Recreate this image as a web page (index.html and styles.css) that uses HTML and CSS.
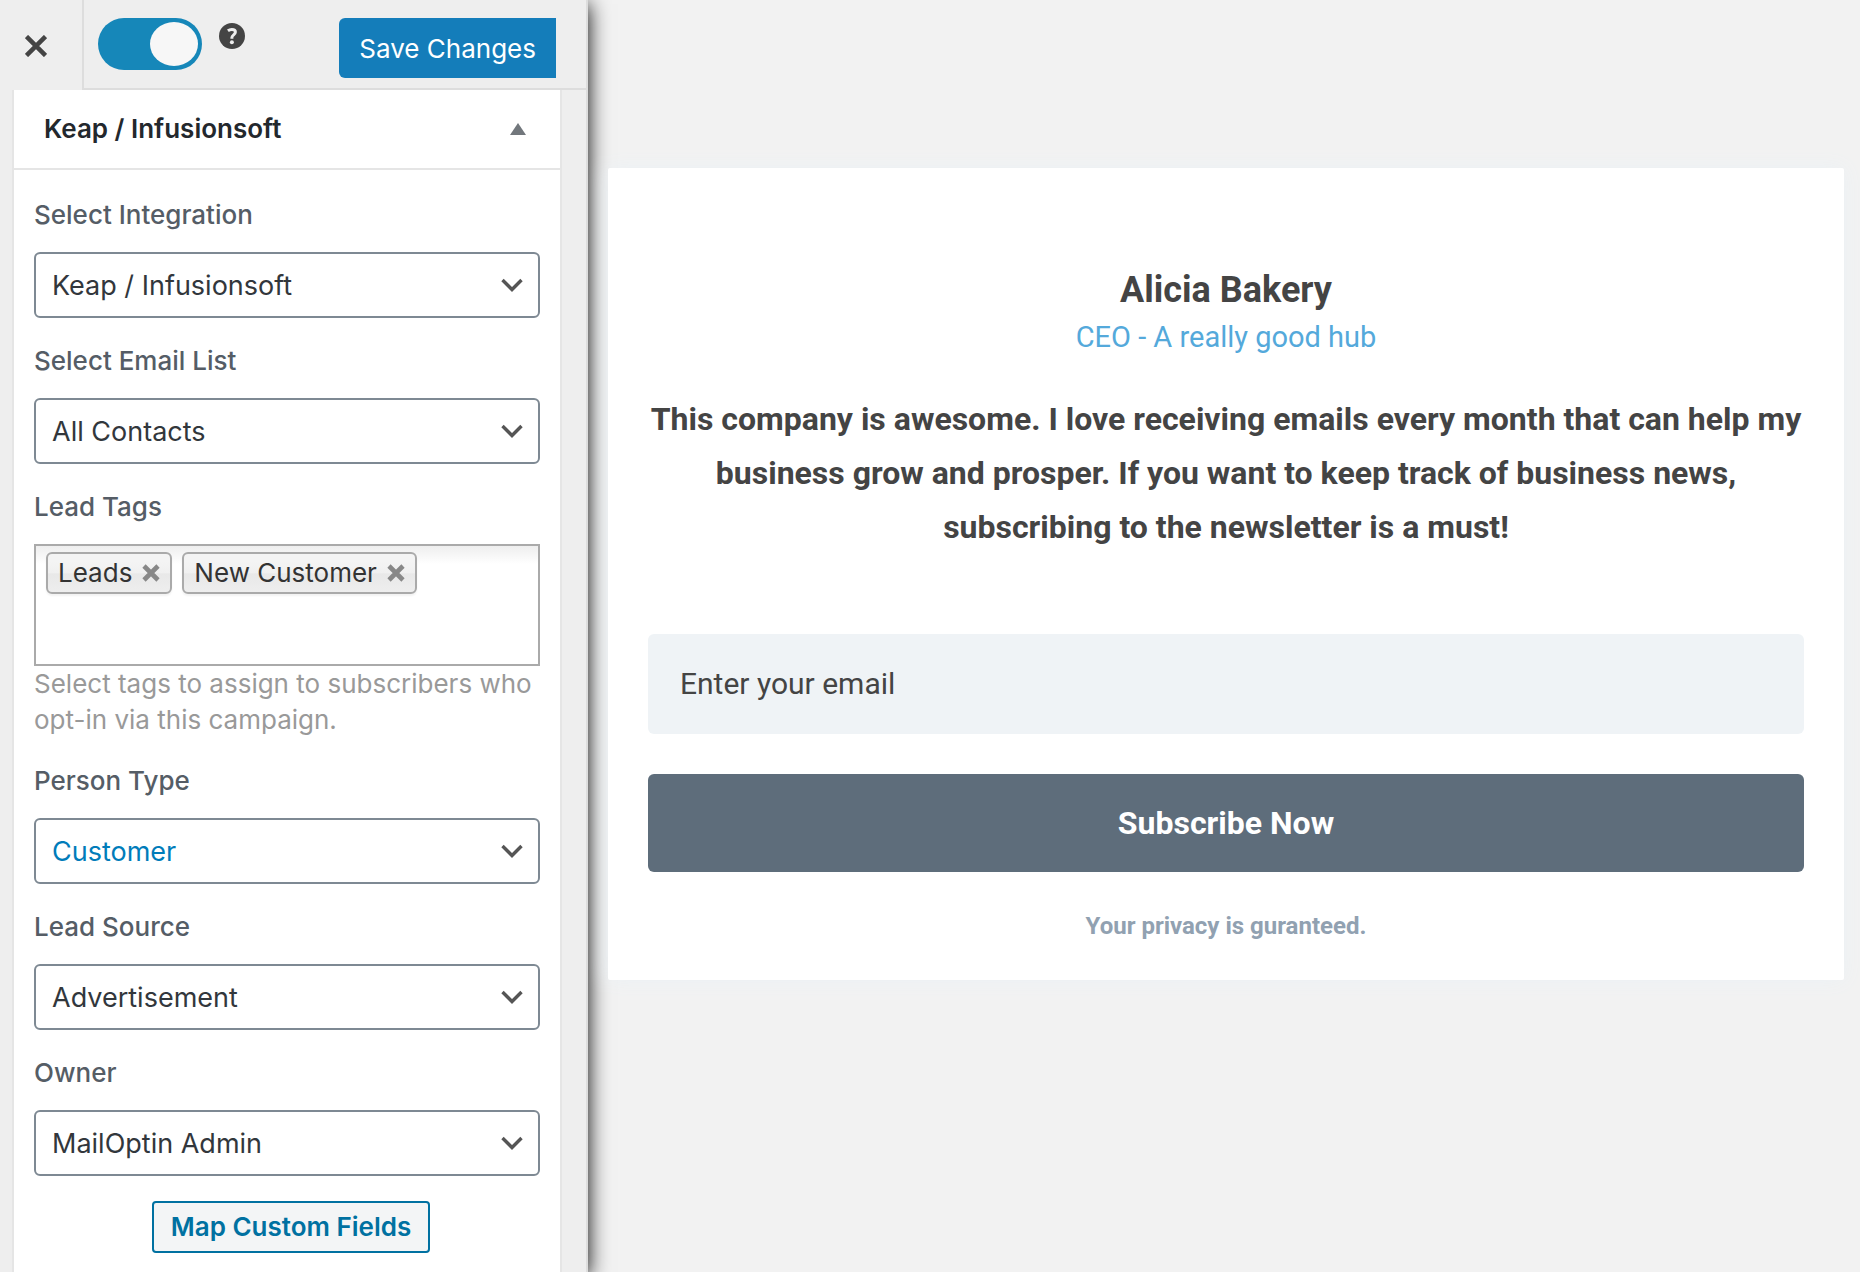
FILE: index.html
```html
<!DOCTYPE html>
<html lang="en">
<head>
  <meta charset="UTF-8">
  <meta name="viewport" content="width=device-width, initial-scale=1">
  <title>MailOptin Customizer</title>
  <link rel="stylesheet" href="styles.css">
</head>
<body>
  <aside class="sidebar">
    <header class="topbar">
      <button class="close-btn" type="button" aria-label="Close">
        <svg width="22" height="22" viewBox="0 0 22 22"><path d="M1.500 1.500l19 19M20.500 1.500l-19 19" stroke="#444" stroke-width="4.500" fill="none"/></svg>
      </button>
      <div class="actions">
        <input class="toggle" type="checkbox" checked aria-label="Activate campaign">
        <button class="help-btn" type="button" aria-label="Help">
          <svg width="26" height="26" viewBox="0 0 26 26">
            <circle cx="13" cy="13" r="13" fill="#444"/>
            <path d="M8.900 7.700c1.200-.9 2.500-1.300 3.900-1.300 2.300 0 3.600 1 3.600 2.700 0 2.800-3.500 2.700-3.500 5.500v1.200" stroke="#eee" stroke-width="3" fill="none"/>
            <circle cx="12.900" cy="19.200" r="2" fill="#eee"/>
          </svg>
        </button>
        <button class="save-btn" type="button">Save Changes</button>
      </div>
    </header>

    <section class="panel">
      <h2 class="panel-title">
        Keap / Infusionsoft
        <svg width="16" height="12" viewBox="0 0 16 12"><path d="M8 0l8 12H0z" fill="#72777c"/></svg>
      </h2>
      <form class="fields">
        <div class="field">
          <label for="integration">Select Integration</label>
          <div class="select">
            <select id="integration"><option>Keap / Infusionsoft</option></select>
            <svg class="chevron" width="22" height="14" viewBox="0 0 22 14"><path d="M1.500 2l9.500 9.500L20.500 2" stroke="#555" stroke-width="3.400" fill="none"/></svg>
          </div>
        </div>
        <div class="field">
          <label for="email-list">Select Email List</label>
          <div class="select">
            <select id="email-list"><option>All Contacts</option></select>
            <svg class="chevron" width="22" height="14" viewBox="0 0 22 14"><path d="M1.500 2l9.500 9.500L20.500 2" stroke="#555" stroke-width="3.400" fill="none"/></svg>
          </div>
        </div>
        <div class="field">
          <span class="label" id="tags-label">Lead Tags</span>
          <ul class="tags" aria-labelledby="tags-label">
            <li class="tag">Leads
              <button class="tag-remove" type="button" aria-label="Remove Leads"><svg width="18" height="18" viewBox="0 0 18 18"><path d="M2 2l14 14M16 2L2 16" stroke="#888" stroke-width="4.600" fill="none"/></svg></button>
            </li>
            <li class="tag">New Customer
              <button class="tag-remove" type="button" aria-label="Remove New Customer"><svg width="18" height="18" viewBox="0 0 18 18"><path d="M2 2l14 14M16 2L2 16" stroke="#888" stroke-width="4.600" fill="none"/></svg></button>
            </li>
          </ul>
          <p class="description">Select tags to assign to subscribers who opt-in via this campaign.</p>
        </div>
        <div class="field">
          <label for="person-type">Person Type</label>
          <div class="select">
            <select id="person-type" class="active"><option>Customer</option></select>
            <svg class="chevron" width="22" height="14" viewBox="0 0 22 14"><path d="M1.500 2l9.500 9.500L20.500 2" stroke="#555" stroke-width="3.400" fill="none"/></svg>
          </div>
        </div>
        <div class="field">
          <label for="lead-source">Lead Source</label>
          <div class="select">
            <select id="lead-source"><option>Advertisement</option></select>
            <svg class="chevron" width="22" height="14" viewBox="0 0 22 14"><path d="M1.500 2l9.500 9.500L20.500 2" stroke="#555" stroke-width="3.400" fill="none"/></svg>
          </div>
        </div>
        <div class="field">
          <label for="owner">Owner</label>
          <div class="select">
            <select id="owner"><option>MailOptin Admin</option></select>
            <svg class="chevron" width="22" height="14" viewBox="0 0 22 14"><path d="M1.500 2l9.500 9.500L20.500 2" stroke="#555" stroke-width="3.400" fill="none"/></svg>
          </div>
        </div>
        <button class="map-btn" type="button">Map Custom Fields</button>
      </form>
    </section>
  </aside>

  <main class="preview">
    <form class="optin">
      <h1 class="name">Alicia Bakery</h1>
      <p class="role">CEO - A really good hub</p>
      <p class="quote">This company is awesome. I love receiving emails every month that can help my business grow and prosper. If you want to keep track of business news, subscribing to the newsletter is a must!</p>
      <input class="email" type="email" placeholder="Enter your email" aria-label="Enter your email">
      <button class="subscribe" type="submit">Subscribe Now</button>
      <p class="note">Your privacy is guranteed.</p>
    </form>
  </main>
</body>
</html>
```
FILE: styles.css
```css
* {
  box-sizing: border-box;
}
body {
  margin: 0;
  display: flex;
  min-height: 100vh;
  background: #f2f2f2;
  font-family: Inter, "Liberation Sans", sans-serif;
  font-size: 26px;
  line-height: 36px;
}
h1, h2, p, ul {
  margin: 0;
  padding: 0;
}
button, input, select {
  font: inherit;
  margin: 0;
}
button {
  border: 0;
  padding: 0;
  background: none;
  cursor: pointer;
}
svg {
  display: block;
}

/* sidebar */
.sidebar {
  flex: 0 0 588px;
  display: flex;
  flex-direction: column;
  background: #eee;
  border-right: 2px solid #ddd;
  box-shadow: 0 4px 20px #000;
}
.topbar {
  display: flex;
  height: 90px;
}
.close-btn {
  width: 82px;
  padding: 2px 20px 0 25px;
}
.actions {
  flex: 1;
  display: flex;
  align-items: flex-start;
  padding: 18px 30px 0 14px;
  border-left: 2px solid #ddd;
  border-bottom: 2px solid #ddd;
}
.toggle {
  appearance: none;
  display: flex;
  justify-content: flex-end;
  width: 104px;
  height: 52px;
  padding: 4px;
  border-radius: 26px;
  background: #1687b9;
}
.toggle::before {
  content: "";
  width: 48px;
  border-radius: 50%;
  background: #f7f7f7;
}
.toggle:not(:checked) {
  justify-content: flex-start;
  background: #999;
}
.help-btn {
  margin: 5px 0 0 17px;
}
.save-btn {
  height: 60px;
  margin-left: auto;
  padding: 2px 20px 0;
  background: #147dba;
  color: #fff;
  border-radius: 6px 0 0 6px;
}

.panel {
  flex: 1;
  margin: 0 24px 0 12px;
  background: #fff;
  border: solid #e5e5e5;
  border-width: 0 2px;
}
.panel-title {
  display: flex;
  align-items: center;
  justify-content: space-between;
  height: 80px;
  padding: 0 34px 0 30px;
  border-bottom: 2px solid #e5e5e5;
  color: #23282d;
  font-size: 26px;
  font-weight: 600;
}
.fields {
  display: flex;
  flex-direction: column;
  gap: 25px;
  padding: 27px 20px 20px;
}
.field label,
.field .label {
  display: block;
  margin-bottom: 19px;
  color: #555d66;
  font-weight: 500;
}
.select {
  display: grid;
  align-items: center;
}
.select select,
.chevron {
  grid-area: 1 / 1;
}
.select select {
  appearance: none;
  height: 66px;
  padding: 2px 48px 0 16px;
  border: 2px solid #7e8993;
  border-radius: 6px;
  background: #fff;
  color: #32373c;
  font-size: 27px;
}
.select select.active {
  color: #007cba;
}
.chevron {
  justify-self: end;
  margin-right: 17px;
  pointer-events: none;
}
.tags {
  display: flex;
  flex-wrap: wrap;
  align-content: flex-start;
  gap: 10px;
  min-height: 122px;
  padding: 6px 10px;
  border: 2px solid #aaa;
  background: linear-gradient(#eee 0, #fff 18px);
  list-style: none;
}
.tag {
  display: flex;
  align-items: center;
  gap: 10px;
  height: 42px;
  padding: 0 10px;
  border: 2px solid #aaa;
  border-radius: 6px;
  background: linear-gradient(#f4f4f4 20%, #f0f0f0 50%, #e8e8e8 52%, #eee 100%);
  box-shadow: 0 2px 2px rgba(0, 0, 0, 0.05);
  color: #333;
}
.description {
  color: #999;
}
.map-btn {
  align-self: center;
  height: 52px;
  margin-left: 8px;
  padding: 0 17px;
  border: 2px solid #0071a1;
  border-radius: 4px;
  background: #f3f5f6;
  color: #0071a1;
  font-weight: 600;
}

/* optin preview */
.preview {
  flex: 1;
  padding: 168px 16px 40px 20px;
  font-family: Roboto, "Liberation Sans", sans-serif;
}
.optin {
  display: flex;
  flex-direction: column;
  padding: 97px 40px 36px;
  border-radius: 2px;
  background: #fff;
  box-shadow: 0 0 20px #ebf1f5;
  color: #444;
  text-align: center;
}
.name {
  font-size: 36px;
  font-weight: 700;
  line-height: 50px;
}
.role {
  margin-bottom: 33px;
  color: #54a9db;
  font-size: 29px;
  line-height: 44px;
}
.quote {
  margin-bottom: 80px;
  font-size: 32px;
  font-weight: 700;
  line-height: 54px;
}
.email {
  height: 100px;
  margin-bottom: 40px;
  padding: 0 32px 2px;
  border: 0;
  border-radius: 6px;
  background: #eff3f6;
  font-size: 30px;
}
.email::placeholder {
  color: #444;
  opacity: 1;
}
.subscribe {
  height: 98px;
  margin-bottom: 36px;
  border-radius: 6px;
  background: #5e6d7b;
  color: #fff;
  font-size: 32px;
  font-weight: 700;
}
.note {
  color: #91a1b1;
  font-size: 24px;
  font-weight: 700;
}
```
